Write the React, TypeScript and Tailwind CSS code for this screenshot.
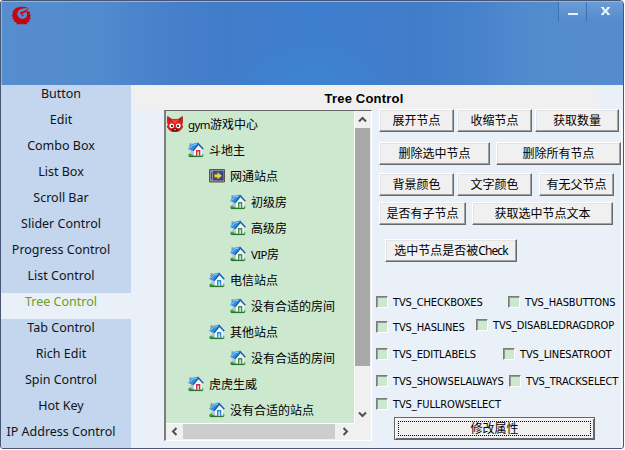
import React from "react";

const CJK = "font-['Noto_Sans','Noto_Sans_CJK_SC',sans-serif]";

const menu = [
  "Button",
  "Edit",
  "Combo Box",
  "List Box",
  "Scroll Bar",
  "Slider Control",
  "Progress Control",
  "List Control",
  "Tree Control",
  "Tab Control",
  "Rich Edit",
  "Spin Control",
  "Hot Key",
  "IP Address Control",
];

function Logo() {
  return (
    <svg width="20" height="20" viewBox="0 0 20 20" className="block">
      <path
        d="M18 2.500C15 .3 9 0 5.500 1.800 2.500 3.500 1.200 6 1.500 9L.5 10l1.300.8-.3 2.300 1.500.4.200 2.500 1.900.1.800 2.200h10l.4-2 2-.3.1-2.500 1.300-1-.6-1.600.7-1.700-.9-1.100-.2-2.300-1.800-.7-1.700.9c1.300 1.500 1.300 4.300-.4 5.800-1.900 1.600-5.200 1.500-6.900-.5C5.700 9 5.900 5.800 8.200 3.900 10.700 2.200 14.500 2 18 2.500z"
        fill="#c5050f"
      />
      <path d="M8.500 6.600 12.500 5.300l5.600-3-3.600 4-3.500 1.400 1.700 1.600-1 1.400-1.500-2.500z" fill="#c5050f" />
    </svg>
  );
}

function Fox() {
  return (
    <svg width="16" height="16" viewBox="0 0 16 16" className="block shrink-0">
      <path
        d="M.6.5 5 3.400h6L15.400.5l.2 5.500-.8 2.500.9 2.500-2.200 3-2.800 1.700H5.300L2.500 14 .3 11l.9-2.500L.4 6z"
        fill="#e3201d"
        stroke="#8e1512"
        strokeWidth=".7"
      />
      <path d="m2 2.500 1.500 1.200L2.200 5zM14 2.500l-1.500 1.200L13.800 5z" fill="#7a1210" />
      <path d="m5 3.800 3 1 3-1-3 4z" fill="#ff4a3c" />
      <circle cx="4.700" cy="9.800" r="2.400" fill="#fff" />
      <circle cx="11.300" cy="9.800" r="2.400" fill="#fff" />
      <circle cx="5" cy="10" r="1.100" fill="#111" />
      <circle cx="11" cy="10" r="1.100" fill="#111" />
      <path d="M4.500 13.400 8 12.200l3.500 1.200-1.900 1.900H6.400z" fill="#2b1414" />
      <path d="M6.500 13.300h3L8 14.500z" fill="#e8dcd8" />
    </svg>
  );
}

function House({ door }: { door: string }) {
  return (
    <svg width="16" height="16" viewBox="0 0 16 16" className="block shrink-0">
      <path d="M.3 13c1.200-2 2.800-1.800 3.700-1h8.500c1.200-1.500 2.700-.5 2.900 1 .2 1.700-1.400 2.200-2.900 2h-10C1 15 0 14.400.3 13z" fill="#3d9b3a" />
      <path d="M1.200 14.600h13.200" stroke="#1f6e2c" strokeWidth=".9" />
      <path d="M1.500 1.300h2v4.500h-2z" fill="#8795a8" />
      <path d="M5.500 7.500 10.300 3l4 4v6.500H5.500z" fill="#f7f8fc" />
      <path d="M2.500 7.500 5.800 8v5.500L2.500 12z" fill="#b4c0d4" />
      <path d="M0 7 4.500 1.800 10.300.5 11 2 5.300 9z" fill="#3291e2" />
      <path d="M1.500 6.600 5 2.900l4-.9" stroke="#8ccdf8" strokeWidth="1" fill="none" />
      <path d="M5 8.700 10.400 2l4.900 5.200" fill="none" stroke="#1a62b2" strokeWidth="1.500" />
      <path d="M8 8h4.300v5.700H8z" fill={door} />
      <path d="M9.400 9.600h1.500v4.100H9.400z" fill="#dceaf2" />
    </svg>
  );
}

function Station() {
  return (
    <svg width="16" height="14" viewBox="0 0 16 14" className="block shrink-0">
      <path d="M.5.5h15v12.500H.5z" fill="#8c929c" stroke="#5b5347" />
      <path d="M4.500 2.500h9.500v8.500H4.500z" fill="#314e96" stroke="#1f2b55" strokeWidth=".6" />
      <path d="M2.500 3v7.500" stroke="#4c5058" />
      <path d="M5.500 5.500h3V3.300l4.300 3.500-4.300 3.500V8.200h-3z" fill="#ffd22e" stroke="#c98a10" strokeWidth=".4" />
    </svg>
  );
}

const red = "#d8283c";
const green = "#3f9440";
const blue = "#1f8fe0";

const tree: { pad: string; icon: React.ReactNode; latin?: string; text: string }[] = [
  { pad: "pl-[1px]", icon: <Fox />, latin: "gym", text: "游戏中心" },
  { pad: "pl-[22px]", icon: <House door={red} />, text: "斗地主" },
  { pad: "pl-[43px]", icon: <Station />, text: "网通站点" },
  { pad: "pl-[64px]", icon: <House door={green} />, text: "初级房" },
  { pad: "pl-[64px]", icon: <House door={green} />, text: "高级房" },
  { pad: "pl-[64px]", icon: <House door={green} />, latin: "VIP", text: "房" },
  { pad: "pl-[43px]", icon: <House door={blue} />, text: "电信站点" },
  { pad: "pl-[64px]", icon: <House door={green} />, text: "没有合适的房间" },
  { pad: "pl-[43px]", icon: <House door={blue} />, text: "其他站点" },
  { pad: "pl-[64px]", icon: <House door={green} />, text: "没有合适的房间" },
  { pad: "pl-[22px]", icon: <House door={red} />, text: "虎虎生威" },
  { pad: "pl-[43px]", icon: <House door={blue} />, text: "没有合适的站点" },
];

function Arrow({ d }: { d: string }) {
  return (
    <svg width="9" height="9" viewBox="0 0 9 9" className="block">
      <path d={d} fill="none" stroke="#505050" strokeWidth="2" />
    </svg>
  );
}

function Btn({ w, children }: { w: string; children: React.ReactNode }) {
  return (
    <button
      className={`${w} flex h-[23px] shrink-0 items-center justify-center whitespace-nowrap border border-t-white border-l-white border-r-[#696969] border-b-[#696969] bg-[#f0f0f0] pt-px text-[12px] leading-none text-black shadow-[inset_-1px_-1px_0_#a0a0a0,inset_1px_1px_0_#e3e3e3]`}
    >
      {children}
    </button>
  );
}

function Check({ label, cls }: { label: string; cls: string }) {
  return (
    <label className={`flex shrink-0 items-center gap-[5px] ${cls}`}>
      <span className="h-3 w-3 shrink-0 border border-t-[#7c7c7c] border-l-[#7c7c7c] border-r-white border-b-white bg-[#cce8cf] shadow-[inset_1px_1px_0_#8f9a90]" />
      <span className="pt-[2px] font-['DejaVu_Sans_Condensed','DejaVu_Sans',sans-serif] text-[11px] leading-3 tracking-[-0.1px] whitespace-nowrap text-black">
        {label}
      </span>
    </label>
  );
}

export default function App() {
  return (
    <div className={`h-[450px] w-[625px] overflow-hidden bg-white ${CJK}`}>
      <div className="flex h-[449px] w-[624px] flex-col overflow-hidden rounded-tl-[3px] rounded-tr-[4px] rounded-b-[3px] border border-[#475674] bg-[#e9f0f8]">
        <header className="flex h-[84px] shrink-0 justify-between border-t border-l border-[#8fb4e0] bg-[radial-gradient(ellipse_90px_45px_at_310px_82px,#3d84d0_0%,transparent_100%),linear-gradient(90deg,#568dce_0%,#528bcd_15%,#477fcb_27%,#427cc9_36%,#3e7ecf_50%,#427cc9_66%,#4780cb_75%,#538ccd_86%,#558ccd_100%)]">
          <div className="pt-1 pl-[9px]">
            <Logo />
          </div>
          <div className="flex h-[19px]">
            <div className="flex w-7 justify-center border-l border-[#3f70b2] bg-gradient-to-b from-[#6b9bd6] to-[#558ccd] pt-[11px]">
              <span className="h-[2px] w-[10px] bg-[#e4f4ff]" />
            </div>
            <div className="flex w-[37px] justify-center border-l border-[#3f70b2] bg-gradient-to-b from-[#6b9bd6] to-[#558ccd] pt-[5px]">
              <svg width="9" height="8" viewBox="0 0 9 8" className="block">
                <path d="M1.300.7 7.700 7.300M7.700.7 1.300 7.300" stroke="#e4f4ff" strokeWidth="2" />
                <path d="M0 .5h3M6 .5h3M0 7.500h3M6 7.500h3" stroke="#e4f4ff" />
              </svg>
            </div>
          </div>
        </header>
        <div className="flex min-h-0 flex-1">
          <nav className="w-[130px] shrink-0 bg-[#c3d6ed]">
            {menu.map((name) => (
              <div
                key={name}
                className={`h-[26px] pr-[10px] text-center text-[12.5px] leading-[17px] whitespace-nowrap ${
                  name === "Tree Control" ? "bg-[#e9f0f8] text-[#6f9c1c]" : "text-[#101418]"
                }`}
              >
                {name}
              </div>
            ))}
          </nav>
          <main className="flex min-w-0 flex-1 flex-col">
            <h1 className="h-[25px] w-[466px] shrink-0 bg-[#f0f0f0] pt-[6px] text-center font-['Liberation_Sans',Arial,sans-serif] text-[13px] leading-[15px] font-bold tracking-[0.2px] text-black">
              Tree Control
            </h1>
            <div className="flex">
              <section className="ml-[33px] flex h-[331px] w-[208px] shrink-0 flex-col border-t border-r border-b border-l-2 border-t-[#696969] border-r-white border-b-white border-l-[#7d7d7d] bg-[#f0f0f0]">
                <div className="flex h-[313px]">
                  <ul className="w-[189px] border-r border-b border-white bg-[#cce8cf]">
                    {tree.map((n, i) => (
                      <li
                        key={i}
                        className={`flex h-[26px] items-center gap-[5px] text-[12px] whitespace-nowrap text-black ${n.pad}`}
                      >
                        {n.icon}
                        <span className="pt-[2px] leading-[18px]">
                          {n.latin && <span className="text-[11.5px] tracking-[-0.6px]">{n.latin}</span>}
                          {n.text}
                        </span>
                      </li>
                    ))}
                  </ul>
                  <div className="flex w-[15px] flex-col items-center">
                    <div className="flex h-[17px] items-center">
                      <Arrow d="M1 6.500 4.500 3 8 6.500" />
                    </div>
                    <div className="h-[238px] w-[15px] bg-[#a8a8a8]" />
                    <div className="mt-[44px]">
                      <Arrow d="M1 2.500 4.500 6 8 2.500" />
                    </div>
                  </div>
                </div>
                <div className="flex h-[15px] items-center">
                  <div className="flex w-[17px] justify-center">
                    <Arrow d="M6.500 1 3 4.500 6.500 8" />
                  </div>
                  <div className="h-[15px] w-[152px] bg-[#cdcdcd]" />
                  <div className="flex w-[21px] justify-center">
                    <Arrow d="M2.500 1 6 4.500 2.500 8" />
                  </div>
                </div>
              </section>
              <section className="h-[338px] w-[250px] shrink-0 border-r border-white">
                <div className="flex gap-[3px] pl-[7px]">
                  <Btn w="w-[75px] -mt-px">展开节点</Btn>
                  <Btn w="w-[75px] -mt-px">收缩节点</Btn>
                  <Btn w="w-[84px] -mt-px">获取数量</Btn>
                </div>
                <div className="mt-[10px] flex gap-[6px] pl-[7px]">
                  <Btn w="w-[111px]">删除选中节点</Btn>
                  <Btn w="w-[125px]">删除所有节点</Btn>
                </div>
                <div className="mt-2 flex gap-[3px] pl-[7px]">
                  <Btn w="w-[75px]">背景颜色</Btn>
                  <Btn w="w-[75px]">文字颜色</Btn>
                  <Btn w="w-[75px] ml-1">有无父节点</Btn>
                </div>
                <div className="mt-[6px] flex gap-[6px] pl-[7px]">
                  <Btn w="w-[87px]">是否有子节点</Btn>
                  <Btn w="w-[141px]">获取选中节点文本</Btn>
                </div>
                <div className="mt-[14px] flex pl-[13px]">
                  <Btn w="w-[132px]">
                    选中节点是否被<span className="text-[12px] tracking-[-0.9px]">Check</span>
                  </Btn>
                </div>
                <div className="mt-[33px] flex h-[14px] pl-1">
                  <Check label="TVS_CHECKBOXES" cls="w-[132px]" />
                  <Check label="TVS_HASBUTTONS" cls="" />
                </div>
                <div className="mt-[9px] flex h-[16px] items-end pl-1">
                  <Check label="TVS_HASLINES" cls="w-[100px]" />
                  <Check label="TVS_DISABLEDRAGDROP" cls="mb-[2px]" />
                </div>
                <div className="mt-[13px] flex h-[14px] pl-1">
                  <Check label="TVS_EDITLABELS" cls="w-[127px]" />
                  <Check label="TVS_LINESATROOT" cls="" />
                </div>
                <div className="mt-[13px] flex h-[14px] pl-1">
                  <Check label="TVS_SHOWSELALWAYS" cls="w-[133px]" />
                  <Check label="TVS_TRACKSELECT" cls="" />
                </div>
                <div className="mt-[9px] flex h-[14px] pl-1">
                  <Check label="TVS_FULLROWSELECT" cls="" />
                </div>
                <button className="mt-[6px] ml-[22px] flex h-[23px] w-[201px] border border-[#646464] bg-[#f0f0f0] p-[3px] text-[12px] leading-none text-black shadow-[inset_1px_1px_0_#fff,inset_-1px_-1px_0_#696969]">
                  <span className="flex h-full w-full items-center justify-center border border-dotted border-black">
                    修改属性
                  </span>
                </button>
              </section>
            </div>
          </main>
        </div>
      </div>
    </div>
  );
}
